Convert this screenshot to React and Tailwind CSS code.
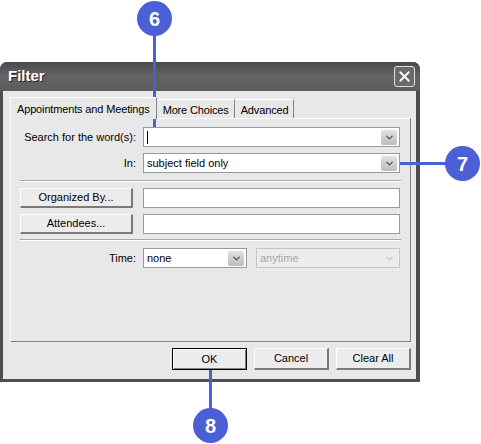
import { ChevronDown, X } from "lucide-react";

function DropButton({ disabled }) {
  return (
    <div
      className={`w-[16px] h-[15px] flex items-center justify-center rounded-[2px] ${
        disabled ? "bg-[#ececec] text-[#c8c8c8]" : "bg-gradient-to-b from-[#e2e2e2] to-[#bdbdbd] text-[#555]"
      }`}
    >
      <ChevronDown size={11} strokeWidth={3} />
    </div>
  );
}

function Combo({ value, caret, disabled, className = "" }) {
  return (
    <div
      className={`h-[20px] flex items-center justify-between pl-[3px] pr-[2px] border ${
        disabled ? "border-[#c4c4c4] bg-[#ececec] text-[#a8a8a8]" : "border-[#9a9a9a] bg-white text-black"
      } ${className}`}
    >
      <span className="flex items-center">
        {caret && <span className="w-px h-[13px] bg-black" />}
        {value}
      </span>
      <DropButton disabled={disabled} />
    </div>
  );
}

function Field() {
  return <div className="h-[20px] border border-[#9a9a9a] bg-white" />;
}

function Btn({ children, def, className = "" }) {
  return (
    <div
      className={`flex items-center justify-center bg-[#ececec] ${
        def
          ? "border border-black shadow-[inset_1px_1px_0_#fff,inset_-1px_-1px_0_#808080]"
          : "border-t border-l border-t-white border-l-white border-r-2 border-b-2 border-r-[#7a7a7a] border-b-[#7a7a7a]"
      } ${className}`}
    >
      {children}
    </div>
  );
}

function Sep() {
  return <div className="h-[2px] border-t border-t-[#a8a8a8] border-b border-b-white" />;
}

function Callout({ n, className }) {
  return (
    <div
      className={`absolute w-[35px] h-[35px] rounded-full bg-[#4b60d6] text-white font-bold text-[20px] flex items-center justify-center ${className}`}
    >
      {n}
    </div>
  );
}

export default function App() {
  return (
    <div className="relative w-[481px] h-[444px] bg-white overflow-hidden font-['Liberation_Sans',sans-serif] text-[11px] text-black">
      <div className="pt-[62px]">
        <div className="w-[420px] h-[320px] rounded-t-[7px] bg-[#4e4e4e] flex flex-col pl-[3px] pr-[4px] pb-[3px]">
          <div className="h-[29px] flex items-center justify-between bg-gradient-to-b from-[#4a4a4a] via-[#646464] to-[#5c5c5c] rounded-t-[7px] -ml-[3px] -mr-[4px] pl-[8px] pr-[5px]">
            <span className="text-white font-bold text-[15px] [text-shadow:1px_1px_0_#222]">Filter</span>
            <div className="w-[21px] h-[21px] border border-[#e0e0e0] rounded-[3px] bg-[#6a6a6a] flex items-center justify-center text-white">
              <X size={17} strokeWidth={2.5} />
            </div>
          </div>
          <div className="flex-1 bg-[#e8e8e8] flex flex-col pl-[7px] pr-[5px] pt-[5px]">
            <div className="flex items-end h-[22px] tracking-[-0.15px]">
              <div className="h-[22px] px-[6px] pt-[3px] bg-[#e8e8e8] border-t border-l border-t-white border-l-white border-r border-r-[#808080] relative z-10 mb-[-1px]">
                Appointments and Meetings
              </div>
              <div className="h-[19px] px-[5px] pt-[2px] border-t border-t-white border-r border-r-[#808080] ml-[1px]">More Choices</div>
              <div className="h-[19px] px-[5px] pt-[2px] border-t border-t-white border-r border-r-[#808080] ml-[1px]">Advanced</div>
            </div>
            <div className="h-[224px] border-t border-l border-t-white border-l-white border-r border-b border-r-[#808080] border-b-[#808080] pl-[9px] pr-[9px] pt-[8px]">
              <div className="grid grid-cols-[116px_257px] gap-x-[7px] gap-y-[6px] items-center">
                <div className="text-right">Search for the word(s):</div>
                <Combo value="" caret />
                <div className="text-right">In:</div>
                <Combo value="subject field only" />
              </div>
              <div className="mt-[7px] mb-[6px]">
                <Sep />
              </div>
              <div className="grid grid-cols-[116px_257px] gap-x-[7px] gap-y-[6px] items-center">
                <Btn className="w-[113px] h-[20px]">Organized By...</Btn>
                <Field />
                <Btn className="w-[113px] h-[20px]">Attendees...</Btn>
                <Field />
              </div>
              <div className="mt-[5px] mb-[7px]">
                <Sep />
              </div>
              <div className="grid grid-cols-[116px_104px_146px] gap-x-[7px] items-center">
                <div className="text-right">Time:</div>
                <Combo value="none" />
                <Combo value="anytime" disabled className="ml-[2px]" />
              </div>
            </div>
            <div className="flex justify-end gap-[7px] mt-[6px]">
              <Btn def className="w-[75px] h-[22px]">OK</Btn>
              <Btn className="w-[75px] h-[22px]">Cancel</Btn>
              <Btn className="w-[75px] h-[22px]">Clear All</Btn>
            </div>
          </div>
        </div>
      </div>

      <div className="absolute left-[153px] top-[30px] w-[3px] h-[97px] bg-[#4b60d6]" />
      <Callout n="6" className="left-[137px] top-[1px]" />

      <div className="absolute left-[400px] top-[162px] w-[48px] h-[3px] bg-[#4b60d6]" />
      <Callout n="7" className="left-[445px] top-[146px]" />

      <div className="absolute left-[209px] top-[370px] w-[3px] h-[40px] bg-[#4b60d6]" />
      <Callout n="8" className="left-[193px] top-[408px]" />
    </div>
  );
}
